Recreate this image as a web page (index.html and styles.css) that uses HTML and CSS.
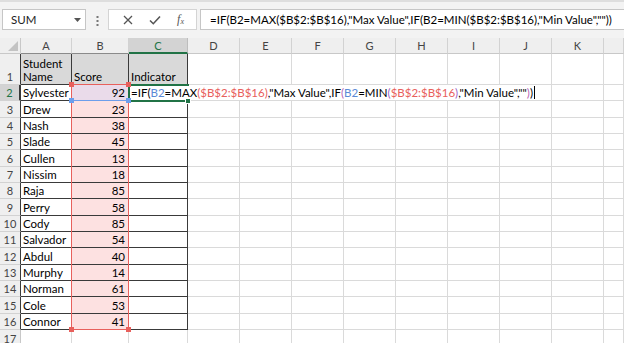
FILE: index.html
```html
<!DOCTYPE html>
<html>
<head>
<meta charset="utf-8">
<link rel="stylesheet" href="styles.css">
</head>
<body>
<div class="fbar">
  <div class="namebox"><span>SUM</span><svg class="arrow" width="7" height="4" viewBox="0 0 7 4"><path d="M0 0H7L3.5 4Z" fill="#555"/></svg></div>
  <svg class="dots" width="3" height="12" viewBox="0 0 3 12"><rect x="0.5" y="1" width="2" height="2" fill="#777"/><rect x="0.5" y="5" width="2" height="2" fill="#777"/><rect x="0.5" y="9" width="2" height="2" fill="#777"/></svg>
  <div class="btns">
    <svg width="10" height="10" viewBox="0 0 10 10"><path d="M1 1L9 9M9 1L1 9" stroke="#555" stroke-width="1.3" fill="none"/></svg>
    <svg width="12" height="10" viewBox="0 0 12 10"><path d="M1 5.5L4.3 8.7L11 1.5" stroke="#555" stroke-width="1.6" fill="none"/></svg>
    <span class="fx">f<sub>x</sub></span>
  </div>
  <div class="formula">=IF(B2=MAX($B$2:$B$16),"Max Value",IF(B2=MIN($B$2:$B$16),"Min Value",""))</div>
</div>
<div class="sheet">
  <div class="grid">
    <div class="corner"><svg width="10" height="10" viewBox="0 0 10 10"><path d="M10 0V10H0Z" fill="#c3c3c3"/></svg></div>
    <div class="ch tb">A</div><div class="ch tb">B</div><div class="ch selc">C</div><div class="ch">D</div><div class="ch">E</div><div class="ch">F</div><div class="ch">G</div><div class="ch">H</div><div class="ch">I</div><div class="ch">J</div><div class="ch">K</div><div class="ch"></div>

    <div class="rh rt">1</div><div class="t f two">Student<br>Name</div><div class="t f">Score</div><div class="t f">Indicator</div><div></div><div></div><div></div><div></div><div></div><div></div><div></div><div></div><div></div>

    <div class="rh rt selr">2</div><div class="t">Sylvester</div><div class="t n b2">92</div><div class="t"></div><div></div><div></div><div></div><div></div><div></div><div></div><div></div><div></div><div></div>
    <div class="rh rt">3</div><div class="t">Drew</div><div class="t n pk">23</div><div class="t"></div><div></div><div></div><div></div><div></div><div></div><div></div><div></div><div></div><div></div>
    <div class="rh rt">4</div><div class="t">Nash</div><div class="t n pk">38</div><div class="t"></div><div></div><div></div><div></div><div></div><div></div><div></div><div></div><div></div><div></div>
    <div class="rh rt">5</div><div class="t">Slade</div><div class="t n pk">45</div><div class="t"></div><div></div><div></div><div></div><div></div><div></div><div></div><div></div><div></div><div></div>
    <div class="rh rt">6</div><div class="t">Cullen</div><div class="t n pk">13</div><div class="t"></div><div></div><div></div><div></div><div></div><div></div><div></div><div></div><div></div><div></div>
    <div class="rh rt">7</div><div class="t">Nissim</div><div class="t n pk">18</div><div class="t"></div><div></div><div></div><div></div><div></div><div></div><div></div><div></div><div></div><div></div>
    <div class="rh rt">8</div><div class="t">Raja</div><div class="t n pk">85</div><div class="t"></div><div></div><div></div><div></div><div></div><div></div><div></div><div></div><div></div><div></div>
    <div class="rh rt">9</div><div class="t">Perry</div><div class="t n pk">58</div><div class="t"></div><div></div><div></div><div></div><div></div><div></div><div></div><div></div><div></div><div></div>
    <div class="rh rt">10</div><div class="t">Cody</div><div class="t n pk">85</div><div class="t"></div><div></div><div></div><div></div><div></div><div></div><div></div><div></div><div></div><div></div>
    <div class="rh rt">11</div><div class="t">Salvador</div><div class="t n pk">54</div><div class="t"></div><div></div><div></div><div></div><div></div><div></div><div></div><div></div><div></div><div></div>
    <div class="rh rt">12</div><div class="t">Abdul</div><div class="t n pk">40</div><div class="t"></div><div></div><div></div><div></div><div></div><div></div><div></div><div></div><div></div><div></div>
    <div class="rh rt">13</div><div class="t">Murphy</div><div class="t n pk">14</div><div class="t"></div><div></div><div></div><div></div><div></div><div></div><div></div><div></div><div></div><div></div>
    <div class="rh rt">14</div><div class="t">Norman</div><div class="t n pk">61</div><div class="t"></div><div></div><div></div><div></div><div></div><div></div><div></div><div></div><div></div><div></div>
    <div class="rh rt">15</div><div class="t">Cole</div><div class="t n pk">53</div><div class="t"></div><div></div><div></div><div></div><div></div><div></div><div></div><div></div><div></div><div></div>
    <div class="rh rt">16</div><div class="t">Connor</div><div class="t n pk">41</div><div class="t"></div><div></div><div></div><div></div><div></div><div></div><div></div><div></div><div></div><div></div>
    <div class="rh last">17</div><div></div><div></div><div></div><div></div><div></div><div></div><div></div><div></div><div></div><div></div><div></div><div></div>
  </div>

  <div class="editor">=IF(<span class="cb">B2</span>=MAX<span class="cr">($B$2:$B$16)</span>,"Max Value",IF<span class="cm">(</span><span class="cb">B2</span>=MIN<span class="cp">(</span><span class="cr">$B$2:$B$16</span><span class="cp">)</span>,"Min Value",""<span class="cm">)</span>)<span class="caret"></span></div>
  <div class="refbox blue"></div>
  <div class="refbox red"></div>
  <div class="active"></div>
  <i class="sq rq q1"></i><i class="sq rq q2"></i><i class="sq rq q3"></i><i class="sq rq q4"></i>
  <i class="sq bq q5"></i><i class="sq bq q6"></i>
  <i class="handle"></i>
</div>
</body>
</html>
```

FILE: styles.css
```css
* { box-sizing: border-box; margin: 0; padding: 0; }

body {
  width: 624px;
  height: 343px;
  overflow: hidden;
  background: #f3f3f3;
  font-family: Lato, "Liberation Sans", sans-serif;
  color: #000;
}

/* formula bar */
.fbar {
  height: 38px;
  display: flex;
  align-items: flex-start;
  padding: 7px 0 0 2px;
  border-top: 2px solid #dedede;
}

.namebox {
  width: 84px;
  height: 21px;
  background: #fff;
  border: 1px solid #c6c6c6;
  display: flex;
  align-items: center;
  justify-content: space-between;
  padding: 0 4px 0 8px;
  font-size: 11.5px;
  color: #222;
}

.dots { margin: 6px 0 0 10px; }

.btns {
  margin-left: 9px;
  width: 89px;
  height: 21px;
  background: #fff;
  border: 1px solid #d4d4d4;
  display: flex;
  align-items: center;
  justify-content: space-around;
  padding: 0 4px 0 6px;
}

.fx {
  font-family: "Liberation Serif", serif;
  font-style: italic;
  font-size: 12px;
  color: #555;
}
.fx sub { font-size: 8px; vertical-align: -1px; }

.formula {
  margin-left: 3px;
  flex: 1;
  height: 21px;
  background: #fff;
  border: 1px solid #c6c6c6;
  border-right: none;
  padding-left: 9px;
  font-size: 11.5px;
  line-height: 19px;
  white-space: nowrap;
}

/* sheet */
.sheet { position: relative; }

.grid {
  display: grid;
  grid-template-columns: 21px 51px 57px 59px repeat(8, 52px) 1fr;
  grid-template-rows: 16px 31px 16px 17px 16px 16px 17px 16px 16px 17px 16px 16px 17px 16px 16px 17px 16px 16px;
  background: #fff;
}

.grid > div {
  border-right: 1px solid #dadada;
  border-bottom: 1px solid #dadada;
  background: #fff;
  font-size: 11.5px;
  line-height: 13px;
  padding: 0 2px 1px 2px;
  display: flex;
  align-items: flex-end;
  white-space: nowrap;
  overflow: hidden;
}

.grid > .corner {
  background: #efefef;
  border-right: 1px solid #c8c8c8;
  border-bottom: 1px solid #c8c8c8;
  justify-content: flex-end;
  padding: 0 2px 2px 0;
}

.grid > .ch {
  background: #efefef;
  border-right-color: #d2d2d2;
  border-bottom-color: #c8c8c8;
  color: #444;
  justify-content: center;
  align-items: center;
  padding: 0;
  font-size: 11px;
}

.grid > .ch.tb { border-bottom-color: #8a8a8a; }

.grid > .selc {
  background: #d3d3d3;
  color: #217346;
  border-right-color: #bdbdbd;
  border-bottom: 2px solid #217346;
}

.grid > .rh {
  background: #efefef;
  border-right-color: #c8c8c8;
  border-bottom-color: #d2d2d2;
  color: #444;
  justify-content: center;
  padding: 0 0 1px 0;
  font-size: 11px;
}

.grid > .rh.rt { border-right-color: #3a3a3a; }
.grid > .rh.last { padding-bottom: 0; }

.grid > .selr {
  background: #d3d3d3;
  color: #217346;
  border-right: 2px solid #217346;
}

.grid > .t {
  border-right-color: #3a3a3a;
  border-bottom-color: #3a3a3a;
}

.grid > .f { background: #d9d9d9; }

.grid > .n { justify-content: flex-end; padding-right: 3px; }
.grid > .pk { background: #fde1e1; }
.grid > .b2 { background: #eadbea; }

/* in-cell editor overlay */
.editor {
  position: absolute;
  left: 129px;
  top: 47px;
  width: 402px;
  height: 15px;
  background: #fff;
  font-size: 11.5px;
  line-height: 15px;
  padding-left: 2px;
  white-space: nowrap;
}

.cb { color: #5b8ad6; }
.cr { color: #e8605c; }
.cm { color: #b65fb6; }
.cp { color: #9d62c8; }

.caret {
  display: inline-block;
  width: 1px;
  height: 13px;
  background: #000;
  vertical-align: -2px;
  margin-left: 1px;
}

.refbox {
  position: absolute;
  left: 71px;
  width: 58px;
  pointer-events: none;
}
.refbox.blue { top: 46px; height: 17px; border: 1px solid #6d9eeb; }
.refbox.red { top: 46px; height: 246px; border: 1px solid #e8605c; }

.active {
  position: absolute;
  left: 128px;
  top: 46px;
  width: 61px;
  height: 18px;
  border: 2px solid #217346;
  border-right: none;
}

.sq {
  position: absolute;
  width: 5px;
  height: 5px;
}
.rq { background: #e8605c; }
.bq { background: #6d9eeb; }
.q1 { left: 69px; top: 44px; }
.q2 { left: 126px; top: 44px; }
.q3 { left: 69px; top: 289px; }
.q4 { left: 126px; top: 289px; }
.q5 { left: 69px; top: 60px; }
.q6 { left: 126px; top: 60px; }

.handle {
  position: absolute;
  left: 185px;
  top: 60px;
  width: 6px;
  height: 6px;
  background: #217346;
  border: 1px solid #fff;
}
```
